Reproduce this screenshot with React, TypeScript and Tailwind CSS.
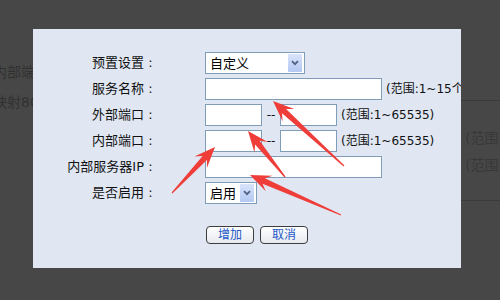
const arrows: { tip: [number, number]; tail: [number, number] }[] = [
  { tip: [273, 101], tail: [344, 166] },
  { tip: [248, 131], tail: [285, 177] },
  { tip: [215, 147], tail: [172, 193] },
  { tip: [250, 175], tail: [341, 215] },
];

function arrowPoints(tip: [number, number], tail: [number, number]) {
  const [tx, ty] = tip;
  const [sx, sy] = tail;
  const dx = tx - sx;
  const dy = ty - sy;
  const len = Math.hypot(dx, dy);
  const ux = dx / len;
  const uy = dy / len;
  const nx = -uy;
  const ny = ux;
  const head = 21;
  const neck = 15;
  const half = 8.5;
  const shaft = 3;
  const p = (a: number, b: number) => `${a.toFixed(1)},${b.toFixed(1)}`;
  return [
    p(sx + nx * 0.6, sy + ny * 0.6),
    p(tx - ux * neck + nx * shaft, ty - uy * neck + ny * shaft),
    p(tx - ux * head + nx * half, ty - uy * head + ny * half),
    p(tx, ty),
    p(tx - ux * head - nx * half, ty - uy * head - ny * half),
    p(tx - ux * neck - nx * shaft, ty - uy * neck - ny * shaft),
    p(sx - nx * 0.6, sy - ny * 0.6),
  ].join(" ");
}

const Input = ({ w }: { w: string }) => (
  <div className={`h-[22px] shrink-0 border border-[#7f9db9] bg-white ${w}`} />
);

const Select = ({ value, w }: { value: string; w: string }) => (
  <div
    className={`flex h-[22px] shrink-0 items-center justify-between border border-[#7f9db9] bg-white pl-[4px] pr-[2px] ${w}`}
  >
    <span className="text-[13px] leading-none text-black">{value}</span>
    <div className="flex h-[18px] w-[14px] items-center justify-center bg-gradient-to-b from-[#d9e4fb] to-[#b4c8f3]">
      <svg width="8" height="6" viewBox="0 0 8 6">
        <path d="M1 1.2 L4 4.2 L7 1.2" fill="none" stroke="#4d6185" strokeWidth="1.8" />
      </svg>
    </div>
  </div>
);

// label text, then a centred colon like the old table layout
const Row = ({ label, children }: { label: string; children: React.ReactNode }) => (
  <div className="flex h-[22px] items-center">
    <div className="flex w-[124px] shrink-0 justify-end whitespace-nowrap text-[13px] leading-[22px] text-[#111]">
      <span>{label}</span>
      <span className="w-[13px] text-center">:</span>
    </div>
    <div className="ml-[48px] flex items-center">{children}</div>
  </div>
);

const Range = ({ text }: { text: string }) => (
  <span className="ml-[4px] whitespace-nowrap text-[12px] leading-none text-[#111]">{text}</span>
);

const Button = ({ text }: { text: string }) => (
  <button className="flex h-[18px] w-[48px] items-center justify-center rounded-[4px] border border-[#3d3d3d] bg-gradient-to-b from-white to-[#e6e9ee] text-[12px] leading-none text-[#2258c8]">
    {text}
  </button>
);

export default function App() {
  return (
    <div className="relative h-[300px] w-[500px] overflow-hidden bg-[#474747] font-['DejaVu_Sans','Noto_Sans_CJK_SC',sans-serif]">
      <div className="flex pt-[29px]">
        <div className="w-[33px] shrink-0 overflow-hidden text-[14px] leading-[20px] text-[#313131]">
          <div className="ml-[-7px] mt-[33px] whitespace-nowrap">内部端口</div>
          <div className="ml-[-7px] mt-[10px] whitespace-nowrap">映射80</div>
        </div>

        <div className="h-[239px] w-[428px] shrink-0 overflow-hidden bg-[#e0e7f3] pt-[23px]">
          <div className="flex flex-col gap-y-[4px]">
            <Row label="预置设置">
              <Select value="自定义" w="w-[100px]" />
            </Row>
            <Row label="服务名称">
              <Input w="w-[177px]" />
              <Range text="(范围:1~15个字符)" />
            </Row>
            <Row label="外部端口">
              <Input w="w-[57px]" />
              <span className="w-[18px] text-center text-[12px] leading-none text-[#111]">--</span>
              <Input w="w-[57px]" />
              <Range text="(范围:1~65535)" />
            </Row>
            <Row label="内部端口">
              <Input w="w-[57px]" />
              <span className="w-[18px] text-center text-[12px] leading-none text-[#111]">--</span>
              <Input w="w-[57px]" />
              <Range text="(范围:1~65535)" />
            </Row>
            <Row label="内部服务器IP">
              <Input w="w-[177px]" />
            </Row>
            <Row label="是否启用">
              <Select value="启用" w="w-[52px]" />
            </Row>
          </div>
          <div className="ml-[173px] mt-[22px] flex gap-[6px]">
            <Button text="增加" />
            <Button text="取消" />
          </div>
        </div>

        <div className="flex-1 overflow-hidden text-[14px] leading-[20px] text-[#383838]">
          <div className="mt-[71px] h-px bg-[#3b3b3b]" />
          <div className="ml-[4px] mt-[27px] whitespace-nowrap">(范围:1~65535)</div>
          <div className="ml-[4px] mt-[7px] whitespace-nowrap">(范围:1~65535)</div>
          <div className="mt-[25px] h-px bg-[#3b3b3b]" />
        </div>
      </div>

      <svg className="pointer-events-none absolute left-0 top-0" width="500" height="300">
        {arrows.map((a, i) => (
          <polygon key={i} points={arrowPoints(a.tip, a.tail)} fill="#ef3e3a" />
        ))}
      </svg>
    </div>
  );
}
